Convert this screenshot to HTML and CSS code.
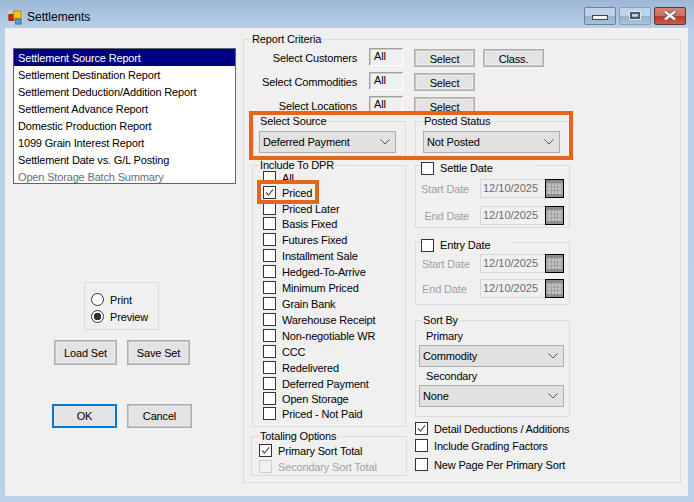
FILE: index.html
```html
<!DOCTYPE html>
<html lang="en">
<head>
    <meta charset="UTF-8">
    <meta name="viewport" content="width=device-width, initial-scale=1.0">
    <title>Settlements</title>
    <link rel="stylesheet" href="styles.css">
</head>
<body>
    <svg class="sprites" width="0" height="0">
        <symbol id="tick" viewBox="0 0 13 13">
            <path d="M2.5 6.5 L5.2 9.5 L10.8 2.8" fill="none" stroke="#555" stroke-width="1.5"/>
        </symbol>
        <symbol id="chevron" viewBox="0 0 10 6">
            <path d="M0.5 0.5 L5 5 L9.5 0.5" fill="none" stroke="#555" stroke-width="1"/>
        </symbol>
        <symbol id="calendar" viewBox="0 0 19 19">
            <rect x="0.5" y="0.5" width="18" height="18" fill="#a9a9a9" stroke="#000"/>
            <rect x="1" y="1" width="17" height="3" fill="#8c8c8c"/>
            <rect x="1" y="15" width="17" height="3" fill="#8f8f8f"/>
            <path d="M3 5h13v10h-13z" fill="#c4c4c4"/>
            <path d="M6.5 5v10M9.5 5v10M12.5 5v10M3 8h13M3 11.500h13" stroke="#a0a0a0" stroke-width="1" fill="none"/>
        </symbol>
    </svg>

    <div class="window">
        <div class="titlebar">
            <svg class="app-icon" width="15" height="15" viewBox="0 0 16 16">
                <rect width="16" height="16" fill="#c9ccd0"/>
                <rect x="1" y="5" width="5" height="6" fill="#d8261c" stroke="#7a1a14" stroke-width="1"/>
                <rect x="6" y="1" width="8" height="8" fill="#f5c518" stroke="#a88410" stroke-width="1"/>
                <rect x="8" y="10" width="6" height="5" fill="#5b9be8" stroke="#3a6fb5" stroke-width="1"/>
            </svg>
            <span class="title">Settlements</span>
            <div class="win-buttons">
                <div class="win-btn"><span class="glyph-min"></span></div>
                <div class="win-btn win-btn-max"><span class="glyph-max"></span></div>
                <div class="win-btn win-btn-close">
                    <svg width="16" height="11" viewBox="0 0 16 11">
                        <path d="M3 1.500 L13 9.500 M13 1.500 L3 9.500" stroke="#555" stroke-width="4.200" fill="none"/>
                        <path d="M3 1.500 L13 9.500 M13 1.500 L3 9.500" stroke="#f4f4f4" stroke-width="2.600" fill="none"/>
                    </svg>
                </div>
            </div>
        </div>

        <div class="client">
            <div class="left-col">
                <ul class="report-list">
                    <li class="selected">Settlement Source Report</li>
                    <li>Settlement Destination Report</li>
                    <li>Settlement Deduction/Addition Report</li>
                    <li>Settlement Advance Report</li>
                    <li>Domestic Production Report</li>
                    <li>1099 Grain Interest Report</li>
                    <li>Settlement Date vs. G/L Posting</li>
                    <li class="muted">Open Storage Batch Summary</li>
                </ul>

                <div class="output-box">
                    <div class="radio-row"><span class="radio"></span>Print</div>
                    <div class="radio-row"><span class="radio radio-on"></span>Preview</div>
                </div>

                <div class="set-buttons">
                    <div class="btn btn-set">Load Set</div>
                    <div class="btn btn-set">Save Set</div>
                </div>

                <div class="dialog-buttons">
                    <div class="btn btn-dialog btn-default">OK</div>
                    <div class="btn btn-dialog">Cancel</div>
                </div>
            </div>

            <fieldset class="group criteria">
                <legend>Report Criteria</legend>

                <div class="pickers">
                    <div class="pick-row">
                        <span class="pick-label">Select Customers</span>
                        <span class="pick-value">All</span>
                        <div class="btn btn-pick">Select</div>
                        <div class="btn btn-pick btn-class">Class.</div>
                    </div>
                    <div class="pick-row">
                        <span class="pick-label">Select Commodities</span>
                        <span class="pick-value">All</span>
                        <div class="btn btn-pick">Select</div>
                    </div>
                    <div class="pick-row">
                        <span class="pick-label">Select Locations</span>
                        <span class="pick-value">All</span>
                        <div class="btn btn-pick">Select</div>
                    </div>
                </div>

                <div class="source-row">
                    <fieldset class="group source-group">
                        <legend>Select Source</legend>
                        <div class="combo">Deferred Payment<svg class="chevron"><use href="#chevron"/></svg></div>
                    </fieldset>
                    <fieldset class="group status-group">
                        <legend>Posted Status</legend>
                        <div class="combo">Not Posted<svg class="chevron"><use href="#chevron"/></svg></div>
                    </fieldset>
                </div>

                <div class="columns">
                    <div class="col-dpr">
                        <fieldset class="group dpr-group">
                            <legend>Include To DPR</legend>
                            <div class="dpr-list">
                                <label class="check"><span class="box"></span>All</label>
                                <label class="check"><span class="box"><svg><use href="#tick"/></svg></span>Priced</label>
                                <label class="check"><span class="box"></span>Priced Later</label>
                                <label class="check"><span class="box"></span>Basis Fixed</label>
                                <label class="check"><span class="box"></span>Futures Fixed</label>
                                <label class="check"><span class="box"></span>Installment Sale</label>
                                <label class="check"><span class="box"></span>Hedged-To-Arrive</label>
                                <label class="check"><span class="box"></span>Minimum Priced</label>
                                <label class="check"><span class="box"></span>Grain Bank</label>
                                <label class="check"><span class="box"></span>Warehouse Receipt</label>
                                <label class="check"><span class="box"></span>Non-negotiable WR</label>
                                <label class="check"><span class="box"></span>CCC</label>
                                <label class="check"><span class="box"></span>Redelivered</label>
                                <label class="check"><span class="box"></span>Deferred Payment</label>
                                <label class="check"><span class="box"></span>Open Storage</label>
                                <label class="check"><span class="box"></span>Priced - Not Paid</label>
                            </div>
                        </fieldset>
                        <fieldset class="group totals-group">
                            <legend>Totaling Options</legend>
                            <label class="check"><span class="box"><svg><use href="#tick"/></svg></span>Primary Sort Total</label>
                            <label class="check check-off"><span class="box"></span>Secondary Sort Total</label>
                        </fieldset>
                    </div>

                    <div class="col-dates">
                        <fieldset class="group date-group settle-group">
                            <legend class="check-legend"><label class="check"><span class="box"></span>Settle Date</label></legend>
                            <div class="date-rows">
                                <div class="date-row"><span class="date-label">Start Date</span><span class="date-input">12/10/2025</span><svg class="cal"><use href="#calendar"/></svg></div>
                                <div class="date-row"><span class="date-label">End Date</span><span class="date-input">12/10/2025</span><svg class="cal"><use href="#calendar"/></svg></div>
                            </div>
                        </fieldset>
                        <fieldset class="group date-group entry-group">
                            <legend class="check-legend"><label class="check"><span class="box"></span>Entry Date</label></legend>
                            <div class="date-rows">
                                <div class="date-row"><span class="date-label">Start Date</span><span class="date-input">12/10/2025</span><svg class="cal"><use href="#calendar"/></svg></div>
                                <div class="date-row"><span class="date-label">End Date</span><span class="date-input">12/10/2025</span><svg class="cal"><use href="#calendar"/></svg></div>
                            </div>
                        </fieldset>
                        <fieldset class="group sort-group">
                            <legend>Sort By</legend>
                            <div class="sort-label">Primary</div>
                            <div class="combo">Commodity<svg class="chevron"><use href="#chevron"/></svg></div>
                            <div class="sort-label">Secondary</div>
                            <div class="combo">None<svg class="chevron"><use href="#chevron"/></svg></div>
                        </fieldset>
                        <div class="extra-checks">
                            <label class="check"><span class="box"><svg><use href="#tick"/></svg></span>Detail Deductions / Additions</label>
                            <label class="check"><span class="box"></span>Include Grading Factors</label>
                            <label class="check check-last"><span class="box"></span>New Page Per Primary Sort</label>
                        </div>
                    </div>
                </div>
            </fieldset>
        </div>

        <!-- orange callouts drawn over the dialog -->
        <div class="callout callout-source"></div>
        <div class="callout callout-priced"></div>
    </div>
</body>
</html>
```

FILE: styles.css
```css
body {
    margin: 0;
    padding: 0;
    font-family: "Liberation Sans", Arial, sans-serif;
    font-size: 11px;
    letter-spacing: -0.160px;
    color: #000;
    background-color: #bad1eb;
}
.sprites {
    position: absolute;
}
.window {
    position: relative;
    width: 694px;
    height: 502px;
    overflow: hidden;
    background: linear-gradient(to bottom, #9db8d6 0, #b9d0ea 30px, #bcd3ed 100%);
}

/* title bar */
.titlebar {
    display: flex;
    align-items: center;
    height: 28px;
    padding: 4px 8px 0 8px;
    box-sizing: border-box;
}
.app-icon {
    flex: none;
    margin-top: 2px;
}
.title {
    margin-left: 4px;
    margin-top: 2px;
    font-size: 12px;
    letter-spacing: 0;
}
.win-buttons {
    display: flex;
    gap: 3px;
    margin-left: auto;
    margin-top: -1px;
}
.win-btn {
    display: flex;
    align-items: center;
    justify-content: center;
    width: 30px;
    height: 16px;
    border: 1px solid #6f8299;
    border-radius: 2px;
    background: linear-gradient(to bottom, #bdd3ea 0, #bdd3ea 48%, #97b2cf 52%, #a9c2dc 100%);
}
.win-btn-max {
    border-color: #8ba0b8;
}
.win-btn-close {
    border-color: #6e2e2b;
    background: linear-gradient(to bottom, #d98176 0, #cf6d60 48%, #b9382a 52%, #c65a4c 100%);
}
.glyph-min {
    width: 14px;
    height: 3px;
    margin-top: 4px;
    border: 1px solid #444;
    background-color: #f2f2f2;
}
.glyph-max {
    width: 10px;
    height: 7px;
    box-sizing: border-box;
    border: 2px solid #4a5866;
    outline: 1px solid #dfe8f1;
}

/* dialog body */
.client {
    display: flex;
    width: 683px;
    height: 468px;
    margin-left: 5px;
    background-color: #f0f0f0;
}
.left-col {
    flex: none;
    width: 238px;
}
.report-list {
    list-style: none;
    box-sizing: border-box;
    width: 223px;
    height: 136px;
    margin: 20px 0 0 8px;
    padding: 0;
    overflow: hidden;
    border: 1px solid #646464;
    background-color: white;
}
.report-list li {
    height: 17px;
    line-height: 19px;
    padding-left: 4px;
}
.report-list .selected {
    background-color: #000080;
    color: white;
}
.report-list .muted {
    color: #6d6d6d;
}
.output-box {
    box-sizing: border-box;
    width: 75px;
    height: 48px;
    margin: 98px 0 0 79px;
    padding: 8px 0 0 6px;
    border: 1px solid #dcdcdc;
}
.radio-row {
    display: flex;
    align-items: center;
    gap: 6px;
    height: 17px;
}
.radio {
    width: 13px;
    height: 13px;
    box-sizing: border-box;
    border: 1px solid #333;
    border-radius: 50%;
    background-color: white;
}
.radio-on {
    background: radial-gradient(circle, #333 0, #333 3.500px, white 4px);
}
.btn {
    display: flex;
    align-items: center;
    justify-content: center;
    box-sizing: border-box;
    border: 1px solid #adadad;
    background-color: #e3e3e3;
    box-shadow: inset 0 0 0 1px #c6c6c6, inset 0 0 0 2px #ebebeb;
}
.set-buttons {
    display: flex;
    gap: 10px;
    margin: 10px 0 0 49px;
}
.btn-set {
    width: 63px;
    height: 25px;
}
.dialog-buttons {
    display: flex;
    gap: 10px;
    margin: 39px 0 0 47px;
}
.btn-dialog {
    width: 65px;
    height: 24px;
}
.btn-default {
    border: 2px solid #0078d7;
    box-shadow: inset 0 0 0 1px #ebebeb;
}

/* group boxes */
.group {
    box-sizing: border-box;
    min-width: 0;
    margin: 0;
    padding: 0;
    border: 1px solid #dcdcdc;
}
.group legend {
    height: 14px;
    line-height: 14px;
    margin-left: 7px;
    padding: 0 1px;
}
.criteria {
    flex: none;
    width: 438px;
    height: 451px;
    margin: 4px 0 0 0;
}
.pickers {
    display: flex;
    flex-direction: column;
    gap: 6px;
    padding-top: 2px;
}
.pick-row {
    display: flex;
    height: 18px;
}
.pick-label {
    flex: none;
    width: 113px;
    line-height: 20px;
    text-align: right;
}
.pick-value {
    flex: none;
    box-sizing: border-box;
    width: 34px;
    height: 18px;
    margin: 0 11px 0 12px;
    padding: 1px 0 0 4px;
    line-height: 13px;
    border-top: 1px solid #a0a0a0;
    border-left: 1px solid #a0a0a0;
    border-right: 1px solid #fff;
    border-bottom: 1px solid #fff;
    box-shadow: inset 1px 1px 0 #cdcdcd;
}
.btn-pick {
    width: 61px;
    height: 18px;
    margin-top: 1px;
    padding-top: 2px;
}
.btn-class {
    margin-left: 8px;
}
.source-row {
    display: flex;
    gap: 9px;
    margin-left: 9px;
}
.source-group {
    width: 153px;
    height: 44px;
}
.source-group legend {
    margin-left: 5px;
}
.status-group {
    width: 155px;
    height: 44px;
}
.combo {
    display: flex;
    align-items: center;
    justify-content: space-between;
    box-sizing: border-box;
    height: 22px;
    padding: 0 4px 0 3px;
    border: 1px solid #adadad;
    background-color: #e1e1e1;
}
.source-group .combo,
.status-group .combo {
    width: 137px;
    margin: 3px 0 0 5px;
}
.status-group .combo {
    margin-left: 7px;
}
.chevron {
    width: 10px;
    height: 6px;
    margin-right: 1px;
}
.columns {
    display: flex;
    gap: 9px;
    margin-left: 8px;
}
.col-dpr {
    flex: none;
    width: 154px;
}
.dpr-group {
    height: 269px;
}
.dpr-group legend {
    margin-left: 6px;
}
.dpr-list {
    margin-top: -1px;
    padding-left: 10px;
}
.check {
    display: flex;
    align-items: center;
    gap: 6px;
    height: 13px;
    white-space: nowrap;
}
.dpr-list .check {
    height: 16px;
    align-items: flex-start;
    line-height: 14px;
}
.dpr-list .check:nth-child(1),
.dpr-list .check:nth-child(3),
.dpr-list .check:nth-child(14),
.dpr-list .check:nth-child(15) {
    height: 15px;
}
.box {
    flex: none;
    width: 13px;
    height: 13px;
    box-sizing: border-box;
    border: 1px solid #333;
    background-color: white;
}
.box svg {
    display: block;
    width: 11px;
    height: 11px;
}
.totals-group {
    width: 156px;
    height: 47px;
    margin: 2px 0 0 -1px;
}
.totals-group .check {
    height: 16px;
    margin-left: 7px;
    align-items: flex-start;
    line-height: 14px;
}
.totals-group .check:first-of-type {
    margin-top: 1px;
}
.check-off {
    color: #a0a0a0;
}
.check-off .box {
    border-color: #cfcfcf;
    background-color: #f0f0f0;
}
.col-dates {
    flex: none;
    width: 155px;
}
.date-group {
    height: 66px;
    margin-top: 4px;
}
.date-group .check-legend {
    height: 6px;
    line-height: 13px;
    margin-left: 5px;
    padding: 0;
}
.settle-group .check-legend {
    width: 112px;
}
.entry-group {
    margin-top: 11px;
}
.entry-group .check-legend {
    width: 90px;
}
.date-rows {
    display: flex;
    flex-direction: column;
    gap: 8px;
    margin-top: 11px;
    padding-left: 5px;
}
.entry-group .date-rows {
    gap: 6px;
    margin-top: 9px;
    padding-left: 6px;
}
.date-row {
    display: flex;
    align-items: center;
    height: 19px;
}
.date-label {
    flex: none;
    width: 48px;
    margin-right: 11px;
    color: #a0a0a0;
    text-align: right;
    white-space: nowrap;
}
.entry-group .date-label {
    width: 47px;
    text-align: left;
}
.date-input {
    flex: none;
    box-sizing: border-box;
    width: 68px;
    height: 19px;
    padding-left: 2px;
    line-height: 17px;
    color: #6d6d6d;
    border-top: 1px solid #d6d6d6;
    border-left: 1px solid #d6d6d6;
    border-bottom: 1px solid #d6d6d6;
    letter-spacing: 0;
}
.cal {
    flex: none;
    width: 19px;
    height: 19px;
    margin-left: -3px;
}
.sort-group {
    height: 104px;
    margin-top: 8px;
}
.sort-group legend {
    margin-left: 6px;
}
.sort-label {
    height: 14px;
    line-height: 14px;
    margin: 2px 0 2px 10px;
}
.sort-group .combo {
    width: 145px;
    margin-left: 3px;
}
.extra-checks {
    margin-top: 5px;
}
.extra-checks .check {
    height: 16px;
    align-items: flex-start;
    line-height: 14px;
}
.extra-checks .check:first-child {
    height: 17px;
}
.extra-checks .check-last {
    margin-top: 3px;
}

/* callouts */
.callout {
    position: absolute;
    box-sizing: border-box;
    border: 4px solid #e2661f;
}
.callout-source {
    left: 249px;
    top: 111px;
    width: 324px;
    height: 49px;
}
.callout-priced {
    left: 257px;
    top: 180px;
    width: 62px;
    height: 24px;
}
```
